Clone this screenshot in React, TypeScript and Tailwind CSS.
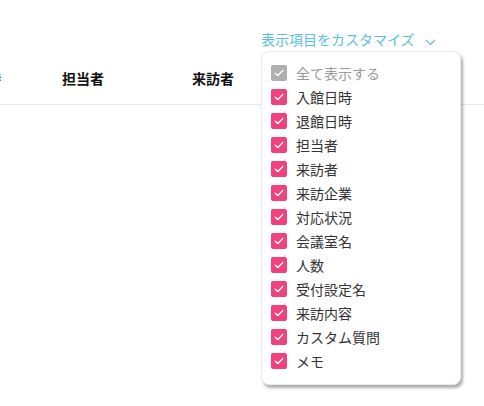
const items = [
  "入館日時",
  "退館日時",
  "担当者",
  "来訪者",
  "来訪企業",
  "対応状況",
  "会議室名",
  "人数",
  "受付設定名",
  "来訪内容",
  "カスタム質問",
  "メモ",
];

function Check({ color }: { color: string }) {
  return (
    <span className={`flex h-4 w-4 items-center justify-center rounded-[2px] ${color}`}>
      <svg width="12" height="12" viewBox="0 0 12 12" fill="none">
        <polyline
          points="2.2,6.2 4.8,8.6 9.8,3.4"
          stroke="white"
          strokeWidth="1.4"
          strokeLinecap="round"
          strokeLinejoin="round"
        />
      </svg>
    </span>
  );
}

export default function App() {
  return (
    <div
      className="relative h-[406px] w-[484px] overflow-hidden bg-white"
      style={{ fontFamily: '"Noto Sans CJK JP", "Noto Sans", sans-serif' }}
    >
      <div className="flex h-[52px] items-start pl-[261px] pt-[28px]">
        <span className="text-[14px] leading-[22px] text-[#5bbfdd]">表示項目をカスタマイズ</span>
        <svg className="ml-[10px] mt-[10px]" width="11" height="8" viewBox="0 0 11 8" fill="none">
          <polyline points="1,2 5.5,6.5 10,2" stroke="#5bbfdd" strokeWidth="1.1" />
        </svg>
      </div>

      <div className="flex h-[53px] items-center overflow-hidden border-b border-[#e6e6e6] text-[14px] font-bold text-[#111]">
        <span className="ml-[-55px] w-[117px] shrink-0">入館日時</span>
        <span className="w-[130px] shrink-0">担当者</span>
        <span>来訪者</span>
      </div>

      <div className="absolute left-[261px] top-[51px] w-[200px] rounded-[8px] border border-[#ececec] bg-white px-[9px] pb-[11px] pt-[9px] shadow-[2px_3px_3px_rgba(0,0,0,0.32)]">
        <div className="flex h-6 items-center gap-[9px]">
          <Check color="bg-[#b0b0b0]" />
          <span className="text-[14px] text-[#9a9a9a]">全て表示する</span>
        </div>
        {items.map((item) => (
          <div key={item} className="flex h-6 items-center gap-[9px]">
            <Check color="bg-[#f0417c]" />
            <span className="text-[14px] text-[#333]">{item}</span>
          </div>
        ))}
      </div>
    </div>
  );
}
